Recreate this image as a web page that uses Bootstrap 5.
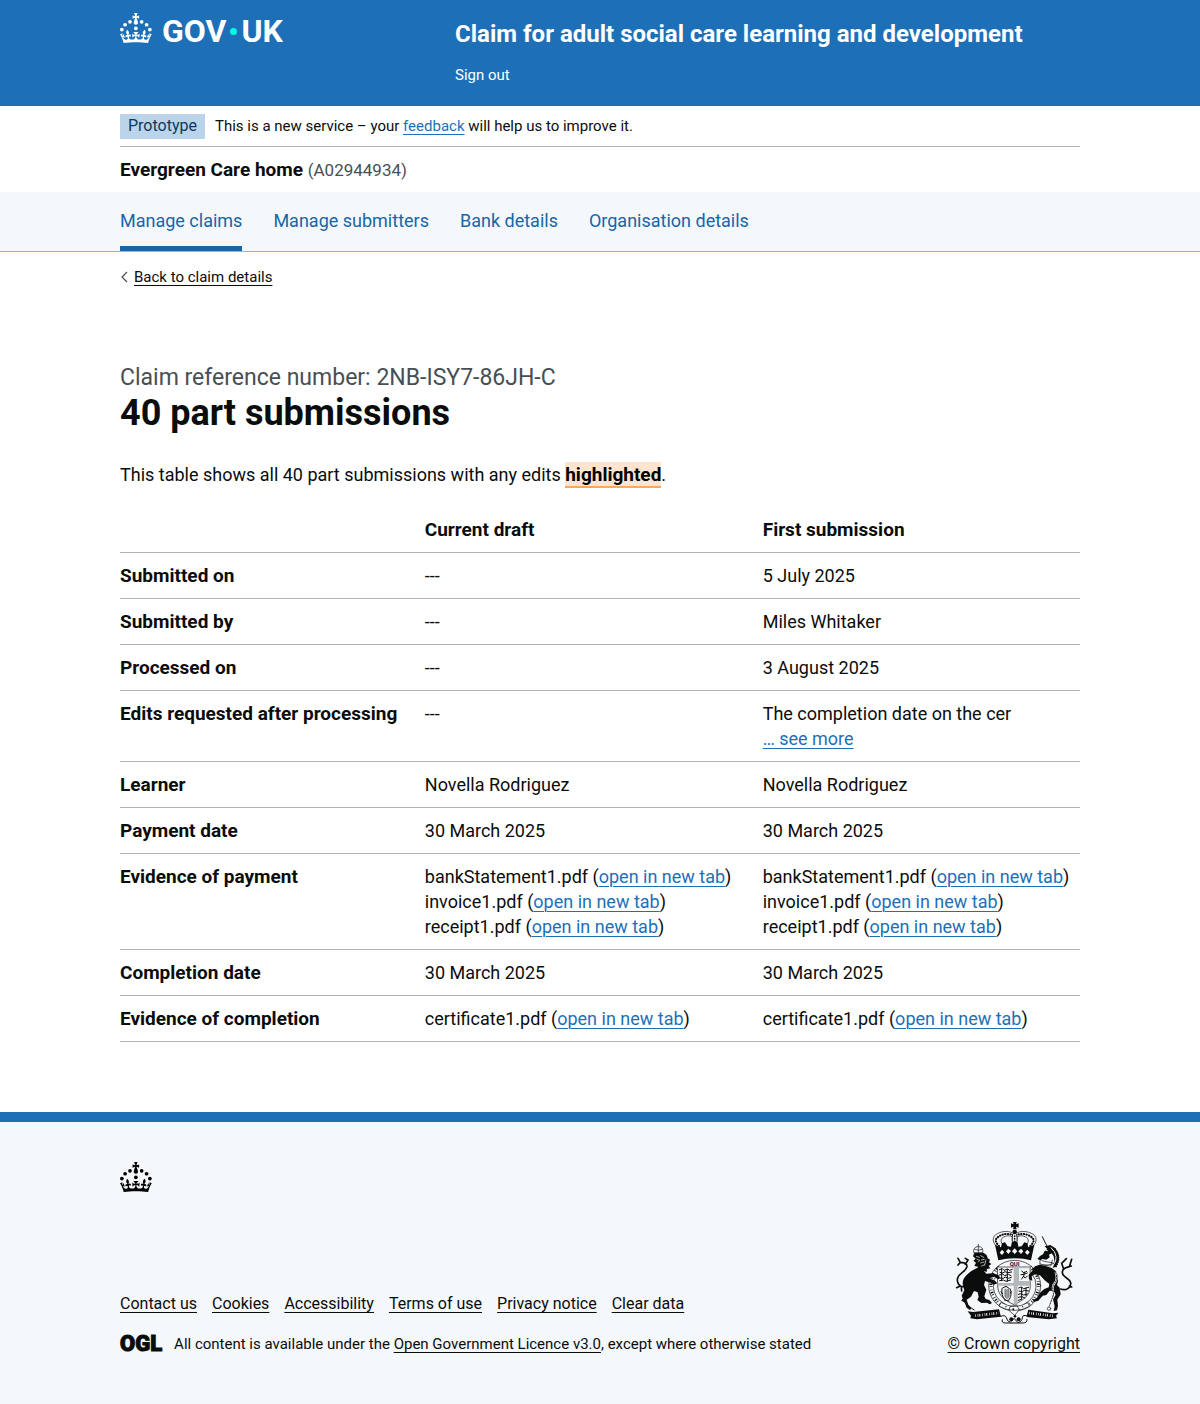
<!DOCTYPE html>
<html lang="en">
<head>
<meta charset="utf-8">
<meta name="viewport" content="width=device-width, initial-scale=1">
<title>40 part submissions – Claim for adult social care learning and development</title>
<link href="https://cdn.jsdelivr.net/npm/bootstrap@5.3.0/dist/css/bootstrap.min.css" rel="stylesheet">
<style>
  :root { --brand: #1d70b8; --ink: #0b0c0c; --tint: #f4f8fb; --secondary: #484f53; }
  body { font: 400 18px/25px Roboto, "Liberation Sans", sans-serif; color: var(--ink); background: var(--tint); }
  a { color: #1a65a6; text-decoration-thickness: 1px; text-underline-offset: 3px; }
  b, strong, th, h1 { font-weight: 700; }
  .page-width { max-width: 960px; margin: 0 auto; }
  .text-small { font-size: 15px; line-height: 20px; }
  .text-note { font-size: 16px; line-height: 20px; }
  .ink-link { color: var(--ink); }
  .inline-link { color: var(--brand); }

  .top-bar { background: var(--brand); color: #fff; height: 106px; }
  .logo-col { width: 335px; padding-top: 13px; }
  .logo-word { font-size: 32px; line-height: 30px; font-weight: 700; color: #fff; margin-left: 10px; padding-top: 3px; }
  .logo-dot { width: 7px; height: 7px; border-radius: 50%; background: #00ffe0; margin: 0 4px; }
  .service-name { font-size: 24px; line-height: 30px; font-weight: 700; color: #fff; }
  .service-col { padding-top: 19px; }
  .sign-out { color: #fff; margin-top: 16px; }

  .phase-strip { border-bottom: 1px solid #b1b4b6; padding: 8px 0 7px; }
  .phase-note { padding-bottom: 2px; }
  .phase-tag { background: #bbd4ea; color: #0f385c; font-size: 16px; line-height: 24px; padding: 0 8px 1px; margin-right: 10px; }
  .org-strip { height: 45px; padding-top: 10px; font-size: 19px; }
  .org-id { font-size: 17px; color: var(--secondary); }
  .section-nav { background: var(--tint); border-bottom: 1px solid #8eb8dc; }
  .section-nav .nav { gap: 31px; }
  .section-nav .nav-link { padding: 16px 0 13px; border-bottom: 5px solid transparent; color: #1a65a6; line-height: 25px; }
  .section-nav .nav-link.active { border-color: #1a65a6; }

  .back-link { padding-top: 15px; }
  .caption-ref { font-size: 23px; line-height: 30px; color: var(--secondary); margin-top: 76px; }
  .page-title { font-size: 36px; line-height: 40px; margin: 0 0 29px; }
  .edit-mark { background: #ffe5cf; border-bottom: 2px solid #ffa85c; font-size: 19px; font-weight: 700; padding: 1px 0 0; }

  .compare { width: 100%; margin: 20px 0 70px; table-layout: fixed; border-collapse: collapse; }
  .compare th, .compare td { padding: 10px 0; border-bottom: 1px solid #b1b4b6; vertical-align: top; }
  .compare th { font-size: 19px; }
  .col-label { width: 31.75%; }
  .col-draft { width: 35.2%; }

  .site-footer { border-top: 10px solid var(--brand); padding: 40px 0 50px; }
  .footer-crown { margin-bottom: 30px; }
  .footer-links { gap: 15px; }
  .ogl-mark { font-size: 22px; line-height: 20px; font-weight: 900; -webkit-text-stroke: 1px var(--ink); margin-right: 12px; }
  .crest-art { width: 118px; height: 102px; margin-bottom: 10px; }
</style>
<script src="https://cdn.jsdelivr.net/npm/bootstrap@5.3.0/dist/js/bootstrap.bundle.min.js"></script>
</head>
<body>
<svg width="0" height="0" class="position-absolute" aria-hidden="true">
  <symbol id="crown" viewBox="0 0 64 60">
    <circle cx="20" cy="17.6" r="3.7"/><circle cx="10.2" cy="23.5" r="3.7"/><circle cx="3.7" cy="33.2" r="3.7"/><circle cx="31.7" cy="30.6" r="3.7"/><circle cx="43.3" cy="17.6" r="3.7"/><circle cx="53.2" cy="23.5" r="3.7"/><circle cx="59.7" cy="33.2" r="3.7"/>
    <path d="M33.1,9.8c.2-.1.3-.3.5-.5l4.6,2.4v-6.8l-4.6,1.5c-.1-.2-.3-.3-.5-.5l1.9-5.9h-6.7l1.9,5.9c-.2.1-.3.3-.5.5l-4.6-1.5v6.8l4.6-2.4c.1.2.3.3.5.5l-2.6,8c-.9,2.8,1.2,5.7,4.1,5.7h0c3,0,5.1-2.9,4.1-5.7l-2.6-8ZM37,37.9s-3.4,3.8-4.1,6.1c2.2,0,4.2-.5,6.4-2.8l-.7,8.5c-2-2.8-4.4-4.1-5.7-3.8.1,3.1.5,6.7,5.8,7.2,3.7.3,6.7-1.5,7-3.8.4-2.6-2-4.3-3.7-1.6-1.4-4.5,2.4-6.1,4.9-3.2-1.9-4.5-1.8-7.7,2.4-10.9,3,4,2.6,7.3-1.2,11.1,2.4-1.3,6.2,0,4,4.6-1.2-2.8-3.7-2.2-4.2.2-.3,1.7.7,3.7,3,4.2,1.9.3,4.7-.9,7-5.9-1.3,0-2.4.7-3.9,1.7l2.4-8c.6,2.3,1.4,3.7,2.2,4.5.6-1.6.5-2.8,0-5.3l5,1.8c-2.6,3.6-5.2,8.7-7.3,17.5-7.4-1.1-15.7-1.7-24.5-1.7h0c-8.8,0-17.1.6-24.5,1.7-2.1-8.9-4.7-13.9-7.3-17.5l5-1.8c-.5,2.5-.6,3.7,0,5.3.8-.8,1.6-2.3,2.2-4.5l2.4,8c-1.5-1-2.6-1.7-3.9-1.7,2.3,5,5.2,6.2,7,5.9,2.3-.4,3.3-2.4,3-4.2-.5-2.4-3-3.1-4.2-.2-2.2-4.6,1.6-6,4-4.6-3.7-3.7-4.2-7.1-1.2-11.1,4.2,3.2,4.3,6.4,2.4,10.9,2.5-2.8,6.3-1.3,4.9,3.2-1.8-2.7-4.1-1-3.7,1.6.3,2.3,3.3,4.1,7,3.8,5.4-.5,5.7-4.2,5.8-7.2-1.3-.2-3.7,1-5.7,3.8l-.7-8.5c2.2,2.3,4.2,2.7,6.4,2.8-.7-2.3-4.1-6.1-4.1-6.1h10.6,0Z"/>
  </symbol>
</svg>

<header class="top-bar">
  <div class="page-width d-flex">
    <div class="logo-col">
      <a href="#" class="d-flex align-items-start text-decoration-none text-white" aria-label="GOV.UK">
        <svg width="32" height="30" fill="currentColor" aria-hidden="true"><use href="#crown"/></svg>
        <span class="logo-word d-flex align-items-center">GOV<span class="logo-dot"></span>UK</span>
      </a>
    </div>
    <div class="service-col">
      <a href="#" class="service-name d-block text-decoration-none">Claim for adult social care learning and development</a>
      <a href="#" class="sign-out text-small d-inline-block text-decoration-none">Sign out</a>
    </div>
  </div>
</header>

<div class="bg-white">
  <div class="page-width">
    <div class="phase-strip d-flex align-items-center text-small">
      <strong class="phase-tag fw-normal">Prototype</strong>
      <span class="phase-note">This is a new service – your <a href="#" class="inline-link">feedback</a> will help us to improve it.</span>
    </div>
    <div class="org-strip"><b>Evergreen Care home</b> <span class="org-id">(A02944934)</span></div>
  </div>
</div>

<nav class="section-nav" aria-label="Sections">
  <div class="page-width">
    <ul class="nav">
      <li class="nav-item"><a class="nav-link active" href="#" aria-current="page">Manage claims</a></li>
      <li class="nav-item"><a class="nav-link" href="#">Manage submitters</a></li>
      <li class="nav-item"><a class="nav-link" href="#">Bank details</a></li>
      <li class="nav-item"><a class="nav-link" href="#">Organisation details</a></li>
    </ul>
  </div>
</nav>

<div class="bg-white overflow-hidden">
  <div class="page-width">
    <div class="back-link text-small d-flex align-items-center">
      <svg width="14" height="12" fill="none" stroke="#484f53" stroke-width="1.2" aria-hidden="true"><path d="M7 1 2 6l5 5"/></svg>
      <a href="#" class="ink-link">Back to claim details</a>
    </div>
    <main>
      <div class="caption-ref">Claim reference number: 2NB-ISY7-86JH-C</div>
      <h1 class="page-title">40 part submissions</h1>
      <p class="m-0">This table shows all 40 part submissions with any edits <mark class="edit-mark text-black">highlighted</mark>.</p>
      <table class="compare">
        <colgroup><col class="col-label"><col class="col-draft"><col></colgroup>
        <thead>
          <tr><td></td><th scope="col">Current draft</th><th scope="col">First submission</th></tr>
        </thead>
        <tbody>
          <tr><th scope="row">Submitted on</th><td>---</td><td>5 July 2025</td></tr>
          <tr><th scope="row">Submitted by</th><td>---</td><td>Miles Whitaker</td></tr>
          <tr><th scope="row">Processed on</th><td>---</td><td>3 August 2025</td></tr>
          <tr><th scope="row">Edits requested after processing</th><td>---</td><td>The completion date on the cer<br><a href="#" class="inline-link">… see more</a></td></tr>
          <tr><th scope="row">Learner</th><td>Novella Rodriguez</td><td>Novella Rodriguez</td></tr>
          <tr><th scope="row">Payment date</th><td>30 March 2025</td><td>30 March 2025</td></tr>
          <tr><th scope="row">Evidence of payment</th>
            <td>bankStatement1.pdf (<a href="#" class="inline-link">open in new tab</a>)<br>invoice1.pdf (<a href="#" class="inline-link">open in new tab</a>)<br>receipt1.pdf (<a href="#" class="inline-link">open in new tab</a>)</td>
            <td>bankStatement1.pdf (<a href="#" class="inline-link">open in new tab</a>)<br>invoice1.pdf (<a href="#" class="inline-link">open in new tab</a>)<br>receipt1.pdf (<a href="#" class="inline-link">open in new tab</a>)</td></tr>
          <tr><th scope="row">Completion date</th><td>30 March 2025</td><td>30 March 2025</td></tr>
          <tr><th scope="row">Evidence of completion</th><td>certificate1.pdf (<a href="#" class="inline-link">open in new tab</a>)</td><td>certificate1.pdf (<a href="#" class="inline-link">open in new tab</a>)</td></tr>
        </tbody>
      </table>
    </main>
  </div>
</div>

<footer class="site-footer text-note">
  <div class="page-width">
    <svg class="footer-crown d-block" width="32" height="30" aria-hidden="true"><use href="#crown"/></svg>
    <div class="d-flex justify-content-between align-items-end">
      <div>
        <ul class="footer-links list-unstyled d-flex flex-wrap mb-0">
          <li><a href="#" class="ink-link">Contact us</a></li>
          <li><a href="#" class="ink-link">Cookies</a></li>
          <li><a href="#" class="ink-link">Accessibility</a></li>
          <li><a href="#" class="ink-link">Terms of use</a></li>
          <li><a href="#" class="ink-link">Privacy notice</a></li>
          <li><a href="#" class="ink-link">Clear data</a></li>
        </ul>
        <div class="d-flex align-items-center mt-3 pt-1">
          <span class="ogl-mark">OGL</span>
          <span class="text-small">All content is available under the <a href="#" class="ink-link">Open Government Licence v3.0</a>, except where otherwise stated</span>
        </div>
      </div>
      <div class="text-center">
        <svg class="crest-art d-block mx-auto" viewBox="48 36 354 306" aria-hidden="true" fill="#0b0c0c" stroke-linecap="round" stroke-linejoin="round">
          <!-- imperial crown -->
          <path d="M222 36h11l-2 7 8-3v13l-8-3 2 8h-11l2-8-8 3V40l8 3z"/>
          <circle cx="227" cy="66" r="7"/>
          <g fill="none" stroke="#0b0c0c">
            <path stroke-width="2" d="M177 114c-16-14-19-30-7-40 14-10 36-13 49-6M277 114c16-14 19-30 7-40-14-10-36-13-49-6M194 108c-10-12-10-20-2-26 10-6 20-6 27-2M260 108c10-12 10-20 2-26-10-6-20-6-27-2"/>
            <path stroke-width="6" stroke-dasharray="1 7" d="M180 108c-12-12-13-21-3-27 12-9 28-12 41-7M274 108c12-12 13-21 3-27-12-9-28-12-41-7"/>
            <path stroke-width="3" d="M221 73c-2 10-2 18 0 28M233 73c2 10 2 18 0 28"/>
            <path stroke-width="5" stroke-dasharray="1 7" d="M227 78v24"/>
          </g>
          <path fill-rule="evenodd" d="M168 104l18 8 3-12 9-3 8 12 10 1 2-12 9-6 9 6 2 12 10-1 8-12 9 3 3 12 18-8-10 47q-49-12-98 0zM189 119l-7 9 7 7 7-8zM208 116l-7 8 7 8 8-9zM227 115l-8 9 8 8 8-8zM246 116l-8 8 8 8 7-8zM265 119l-7 8 7 8 7-8z"/>
          <!-- garter and quartered shield -->
          <ellipse cx="227" cy="227" rx="78" ry="76" fill="#f4f8fb" stroke="#0b0c0c" stroke-width="2"/>
          <path fill="none" stroke="#0b0c0c" stroke-width="9" stroke-linecap="butt" stroke-dasharray="2 5 4 4 2 8" d="M180 171q-26 22-24 58 1 38 38 60M274 171q26 22 24 58-1 38-38 60"/>
          <path fill="none" stroke="#0b0c0c" stroke-width="2" d="M176 190q-15 18-13 40 2 34 34 52M278 190q15 18 13 40-2 34-34 52"/>
          <path fill="#f4f8fb" stroke="#0b0c0c" stroke-width="2" d="M176 171h98v56c0 30-22 44-49 57-27-13-49-27-49-57z"/>
          <path fill="#b4b8ba" d="M224 170h12v114h-12zM176 219h98v8h-98zM235 171h39v49h-39z"/>
          <path fill="#f4f8fb" d="M240 175h30v38h-30z"/>
          <g fill="none" stroke="#0b0c0c" stroke-width="3">
            <path d="M181 179l9-3 5 5 11-4 6 4 8-3M183 187l8 2 7-4 8 3 12-2M181 195l10-3 6 5 11-4 8 4M184 204l9 1 6-4 9 4 9-3M182 212l11-2 8 4 14-4M188 177v35M205 178v36"/>
            <path d="M239 234l8-3 7 5 15-4M240 243l10 2 6-4 13 2M238 253l9-2 7 4 11-3M238 262l10-2 10 4M238 271l9-3M248 233v34M261 234v23"/>
            <path d="M248 183l7 6 8-5M246 194l10-1 9-4M248 207l5-8 6 5 6-6M256 186l-2 14"/>
            <path d="M189 236c-2 12 0 25 8 32M213 236c5 12 4 26-4 34M191 234l10-5 9 6M186 245l5 6M217 245l-3 5M196 270l14 3"/>
          </g>
          <path fill="#b4b8ba" d="M195 238h16l2 20-8 10-10-9z"/>
          <path fill="none" stroke="#0b0c0c" stroke-width="1" d="M199 237v26M204 237v30M209 237v26"/>
          <path fill="#f4f8fb" stroke="#0b0c0c" stroke-width="2" d="M188 278q38 23 78 0l6 11q-45 25-91 0zM214 290l19-5 8 14-14 17-16-14z"/>
          <circle cx="223" cy="298" r="3"/><circle cx="201" cy="290" r="2"/><circle cx="251" cy="290" r="2"/>
          <text x="227" y="168" text-anchor="middle" font-family="Roboto, sans-serif" font-weight="700" font-size="18">QUI</text>
          <!-- lion -->
          <path fill="none" stroke="#0b0c0c" stroke-width="2" d="M104 127q-3-15 14-18 17 3 13 18zM118 103v25M107 118q11 6 23 0"/>
          <path d="M106 129l27-1 10 7 3 10 7 4-3 8 7 5-8 6 5 7-10 2-1 9-9-4-7 5-4-9-9 1 3-9-11-2 5-10-8-6 7-6-8-7z"/>
          <path fill="none" stroke="#f4f8fb" stroke-width="2" d="M112 139l9 3M125 137l9 5M114 148l8 3-4 5M127 150l9-2M125 159l10-3M128 168l8-3M141 150l-4 15"/>
          <path d="M117 173c-15 5-27 15-36 24-10 10-12 22-8 34l3 10-8 16 3 8-2 8 8 5 5 12 12 9 4-5-10-10-5-15 13-9 9-17 11 4 3 14-4 9 12 9 17-1 8 5 7-4-8-9-11-3-4-8 6-20-7-14 3-12 17 5 10 6 10-4-7-8-17-7 15-5 11 8 7-3-5-9-17-6-20 1-11-13z"/>
          <path fill="none" stroke="#0b0c0c" stroke-width="5" d="M81 228c-18 8-29-9-25-24 6-18 25-18 28-34 1-10-10-13-20-13l-7-12M64 157l-7 8M79 163l8-13-8-5M62 229l-9 4M67 233l1 10"/>
          <path fill="none" stroke="#0b0c0c" stroke-width="3" d="M84 283l-1 9 8 6M98 295l8 5M73 266l-5 5M133 272l18 5"/>
          <!-- unicorn -->
          <path fill="none" stroke="#0b0c0c" stroke-width="3" stroke-dasharray="4 2" d="M310 80l15 31"/>
          <path d="M317 109l17-4 13 8 9 13 4 15-2 14-7 15-10 4 6-15-3-20-6-9-8 4 2 8-10 7-11-2-8 4-8-4 8-9 9-5 5-10 8-6z"/>
          <path fill="none" stroke="#f4f8fb" stroke-width="3" d="M320 121l5 1M336 113q14 12 15 27t-6 22"/>
          <path fill="none" stroke="#0b0c0c" stroke-width="2" d="M306 146q-6 9-3 16M309 152l12 3 22 4M303 162q20 8 42-2M301 168q12-6 30 0M340 150l-5 18"/>
          <path fill="none" stroke="#0b0c0c" stroke-width="4" stroke-dasharray="2 5" d="M348 116q13 17 11 32-2 13-9 24"/>
          <path d="M281 178l7-9 14-5 18 4 18 6 13 10 5 12 1 17-3 12 8 8 3 20-10 16 2 18-3 14-10 2 3-14-5-21 8-14-6-10-12-2-10 13-11 2-13 15-14 4-2-5 12-7 9-16 13-11 13-5 2-10-14-11-14-15-16-3-9 6 2 13-10-4-1-13 12-14z"/>
          <path fill="none" stroke="#f4f8fb" stroke-width="6" d="M350 188q7 20-3 31t-3 33"/>
          <path fill="none" stroke="#0b0c0c" stroke-width="3" stroke-dasharray="4 4" d="M350 188q7 20-3 31t-3 33q-5 15-13 36"/>
          <circle cx="330" cy="296" r="5" fill="none" stroke="#0b0c0c" stroke-width="2"/>
          <path fill="none" stroke="#0b0c0c" stroke-width="5" d="M365 237c18 7 32-6 30-19-3-14-25-15-25-31 0-9 11-15 21-17l7-22M384 172l13-4M374 178l-6-18 14-14M391 228l7 3"/>
          <!-- motto scrolls -->
          <path d="M86 304l16 2 78-8 6 22-72 8-20-3 2-8zM358 308l-16 2-74-11-6 22 68 7 24-3-3-7z"/>
          <path fill="none" stroke="#f4f8fb" stroke-width="8" stroke-linecap="butt" stroke-dasharray="2 5 2 3 3 6" d="M109 317l70-8M270 309l74 9"/>
          <path fill="#f4f8fb" stroke="#0b0c0c" stroke-width="3" d="M185 319q14-6 17 4 2 11 12 14l11-12 12 13q13-4 13-15t19-4M190 329q-4 10 10 10h53q12 0 11-11"/>
          <circle cx="217" cy="328" r="6"/><circle cx="239" cy="328" r="6"/><circle cx="228" cy="319" r="4"/>
        </svg>
        <a href="#" class="ink-link">© Crown copyright</a>
      </div>
    </div>
  </div>
</footer>
</body>
</html>
